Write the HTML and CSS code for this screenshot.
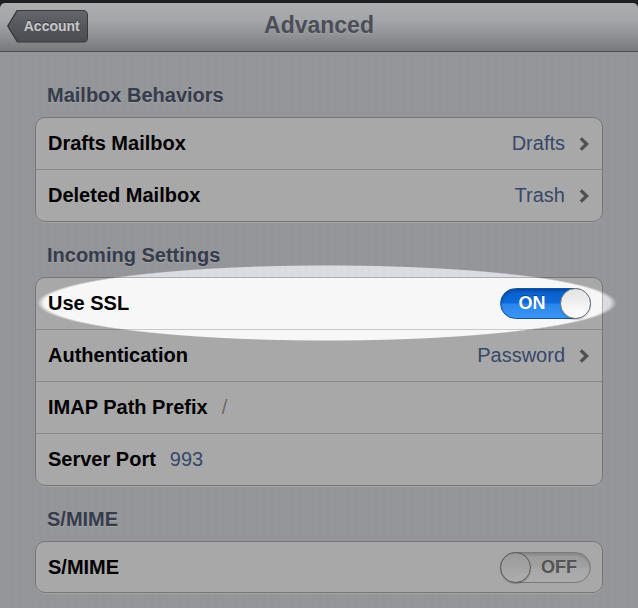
FILE: index.html
```html
<!DOCTYPE html>
<html>
<head>
<meta charset="utf-8">
<link rel="stylesheet" href="styles.css">
</head>
<body>
<div class="screen">
  <header class="navbar">
    <div class="back"><div class="back-inner">Account</div></div>
    <h1 class="title">Advanced</h1>
    <div class="nav-spacer"></div>
  </header>
  <main class="content">
    <section class="group first">
      <h2 class="group-title">Mailbox Behaviors</h2>
      <div class="cells">
        <div class="cell">
          <span class="label">Drafts Mailbox</span>
          <span class="value">Drafts</span>
          <svg class="chev" width="10" height="14" viewBox="0 0 10 14"><path d="M1.8 1.4 L7.6 7 L1.8 12.6" fill="none" stroke="#767676" stroke-width="3.4"/></svg>
        </div>
        <div class="cell">
          <span class="label">Deleted Mailbox</span>
          <span class="value">Trash</span>
          <svg class="chev" width="10" height="14" viewBox="0 0 10 14"><path d="M1.8 1.4 L7.6 7 L1.8 12.6" fill="none" stroke="#767676" stroke-width="3.4"/></svg>
        </div>
      </div>
    </section>
    <section class="group">
      <h2 class="group-title">Incoming Settings</h2>
      <div class="cells">
        <div class="cell">
          <span class="label">Use SSL</span>
          <div class="switch on"><span class="switch-text">ON</span><span class="knob"></span></div>
        </div>
        <div class="cell">
          <span class="label">Authentication</span>
          <span class="value">Password</span>
          <svg class="chev" width="10" height="14" viewBox="0 0 10 14"><path d="M1.8 1.4 L7.6 7 L1.8 12.6" fill="none" stroke="#767676" stroke-width="3.4"/></svg>
        </div>
        <div class="cell">
          <span class="label">IMAP Path Prefix</span>
          <span class="field placeholder">/</span>
        </div>
        <div class="cell">
          <span class="label">Server Port</span>
          <span class="field">993</span>
        </div>
      </div>
    </section>
    <section class="group">
      <h2 class="group-title">S/MIME</h2>
      <div class="cells">
        <div class="cell">
          <span class="label">S/MIME</span>
          <div class="switch off"><span class="knob"></span><span class="switch-text">OFF</span></div>
        </div>
      </div>
    </section>
  </main>
  <div class="dim"></div>
</div>
</body>
</html>
```

FILE: styles.css
```css
* { box-sizing: border-box; }
html, body {
  margin: 0;
  padding: 0;
}
body {
  background: #1e1f21;
  font-family: "Liberation Sans", Arial, Helvetica, sans-serif;
  width: 638px;
  height: 608px;
  overflow: hidden;
}
.screen {
  position: relative;
  width: 638px;
  height: 608px;
  padding-top: 3px;
}
.navbar {
  height: 49px;
  border-radius: 5px 5px 0 0;
  background: linear-gradient(#abacae 0%, #a5a6a9 35%, #8e9094 70%, #76787d 100%);
  border-bottom: 1px solid #4c4e53;
  display: grid;
  grid-template-columns: 1fr auto 1fr;
  align-items: center;
}
.back {
  justify-self: start;
  margin-left: 7px;
  margin-bottom: 2px;
  width: 81px;
  height: 33px;
  padding: 1px 1px 1px 1.5px;
  background: #37393d;
  border-radius: 5px;
  clip-path: polygon(10px 0, 100% 0, 100% 100%, 10px 100%, 0 50%);
}
.back-inner {
  height: 100%;
  border-radius: 4px;
  background: linear-gradient(#64666c, #55575d 50%, #4a4c52);
  clip-path: polygon(9.5px 0, 100% 0, 100% 100%, 9.5px 100%, 0 50%);
  display: flex;
  align-items: center;
  justify-content: center;
  padding-left: 8px;
  color: #c7c8ca;
  font-size: 14px;
  font-weight: bold;
  text-shadow: 0 -1px 0 rgba(0,0,0,0.45);
}
.title {
  margin: 0 0 4px 0;
  font-size: 23px;
  font-weight: bold;
  color: #4b4e56;
  text-shadow: 0 1px 0 rgba(255,255,255,0.15);
}
.content {
  height: 556px;
  padding: 31px 35px 0 35px;
  background: repeating-linear-gradient(90deg, #dcdde2 0 4px, #dadbe0 4px 7px);
}
.group { margin-top: 21px; }
.group.first { margin-top: 0; }
.group-title {
  margin: 0 0 10px 0;
  padding-left: 12px;
  font-size: 20px;
  line-height: 24px;
  font-weight: bold;
  color: #4e5870;
  text-shadow: 0 1px 0 rgba(255,255,255,0.6);
}
.cells {
  background: #f7f7f7;
  border: 1px solid #aeaeb0;
  border-radius: 10px;
  box-shadow: 0 1px 0 rgba(255,255,255,0.6);
  overflow: hidden;
}
.cell {
  height: 52px;
  display: flex;
  align-items: center;
  padding: 0 11px 0 12px;
  border-top: 1px solid #c9c9cb;
}
.cell:first-child {
  height: 51px;
  border-top: none;
}
.cell:only-child { height: 50px; }
.label {
  font-size: 20px;
  font-weight: bold;
  color: #000;
}
.value {
  margin-left: auto;
  font-size: 20px;
  color: #526a9c;
}
.chev {
  margin-left: 14px;
  margin-right: 2px;
  display: block;
}
.field {
  margin-left: 14px;
  font-size: 20px;
  color: #526a9c;
}
.field.placeholder { color: #9c9c9c; }

.switch {
  margin-left: auto;
  width: 91px;
  height: 31px;
  border-radius: 16px;
  display: flex;
  align-items: center;
  font-size: 18px;
  font-weight: bold;
}
.switch.on {
  background: linear-gradient(#0b5fcf 0%, #0c6ad9 48%, #2a86ec 52%, #3b95f2 100%);
  border: 1px solid #1452a2;
  box-shadow: inset 0 2px 3px rgba(0,0,0,0.25);
  color: #fff;
}
.switch.off {
  background: linear-gradient(#e4e4e4 0%, #ededed 48%, #f6f6f6 52%, #fdfdfd 100%);
  border: 1px solid #b4b4b4;
  box-shadow: inset 0 2px 3px rgba(0,0,0,0.15);
  color: #7a7a7a;
}
.switch-text {
  flex: 1;
  text-align: center;
}
.switch.on .switch-text { text-shadow: 0 -1px 0 rgba(0,0,0,0.35); padding-left: 2px; }
.switch.off .switch-text { text-shadow: 0 1px 0 rgba(255,255,255,0.8); padding-right: 2px; }
.knob {
  width: 31px;
  height: 31px;
  margin: -1px;
  border-radius: 50%;
  background: linear-gradient(#e2e2e2, #f4f4f4 60%, #ffffff);
  border: 1px solid #7f7f7f;
  box-shadow: 0 1px 1px rgba(0,0,0,0.2);
  flex: none;
}
.dim {
  position: absolute;
  left: 0;
  right: 0;
  top: 52px;
  bottom: 0;
  pointer-events: none;
  background: radial-gradient(290px 38px at 327px 251px, rgba(0,0,0,0) 97.5%, rgba(0,0,0,0.32) 100%);
}
```
